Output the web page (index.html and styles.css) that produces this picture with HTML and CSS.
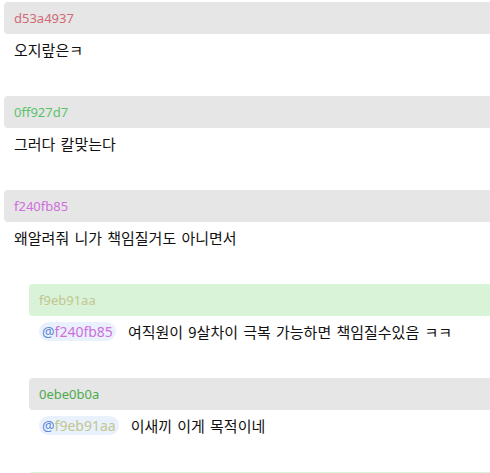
FILE: index.html
```html
<!DOCTYPE html>
<html lang="ko">
<head>
<meta charset="utf-8">
<link rel="stylesheet" href="styles.css">
</head>
<body>
<div class="thread">
  <div class="comment">
    <div class="head"><span class="uid u-d53a49">d53a4937</span></div>
    <div class="body">오지랖은ㅋ</div>
  </div>
  <div class="comment">
    <div class="head"><span class="uid u-0ff927">0ff927d7</span></div>
    <div class="body">그러다 칼맞는다</div>
  </div>
  <div class="comment">
    <div class="head"><span class="uid u-f240fb">f240fb85</span></div>
    <div class="body">왜알려줘 니가 책임질거도 아니면서</div>
  </div>
  <div class="comment reply">
    <div class="head green"><span class="uid u-f9eb91">f9eb91aa</span></div>
    <div class="body"><span class="mention"><span class="at">@</span><span class="u-f240fb">f240fb85</span></span><span class="msg">여직원이 9살차이 극복 가능하면 책임질수있음 ㅋㅋ</span></div>
  </div>
  <div class="comment reply">
    <div class="head"><span class="uid u-0ebe0b">0ebe0b0a</span></div>
    <div class="body"><span class="mention"><span class="at">@</span><span class="u-f9eb91">f9eb91aa</span></span><span class="msg">이새끼 이게 목적이네</span></div>
  </div>
  <div class="comment reply">
    <div class="head green"><span class="uid u-0ebe0b">&nbsp;</span></div>
    <div class="body">&nbsp;</div>
  </div>
</div>
</body>
</html>
```
FILE: styles.css
```css
html, body {
  margin: 0;
  padding: 0;
  background: #ffffff;
  overflow: hidden;
}
body {
  font-family: "Noto Sans", "Noto Sans CJK KR", sans-serif;
  color: #111111;
}
.thread {
  width: 560px;
  padding: 2px 0 0 4px;
  display: flex;
  flex-direction: column;
}
.comment {
  height: 94px;
  display: flex;
  flex-direction: column;
}
.reply {
  margin-left: 25px;
}
.head {
  height: 32px;
  background: #e6e6e6;
  border-radius: 4px 0 0 4px;
  padding-left: 10px;
  display: flex;
  align-items: center;
}
.head.green {
  background: #d9f3d9;
}
.uid {
  font-size: 13px;
  line-height: 32px;
}
.u-d53a49 { color: #d06a76; }
.u-0ff927 { color: #5cc26a; }
.u-f240fb { color: #cf6fdc; }
.u-f9eb91 { color: #c2c68e; }
.u-0ebe0b { color: #4ea94d; }
.body {
  padding: 6px 0 0 10px;
  font-size: 15px;
  line-height: 19px;
  word-spacing: 1px;
  font-family: "Noto Sans CJK KR", "Noto Sans", sans-serif;
  display: flex;
  align-items: center;
}
.mention {
  font-family: "Noto Sans", "Noto Sans CJK KR", sans-serif;
  font-size: 14px;
  line-height: 19px;
  background: #e9f1fd;
  border-radius: 10px;
  padding: 0 3px;
  margin-right: 12px;
  word-spacing: 0;
}
.at {
  color: #5f87d6;
}
```
